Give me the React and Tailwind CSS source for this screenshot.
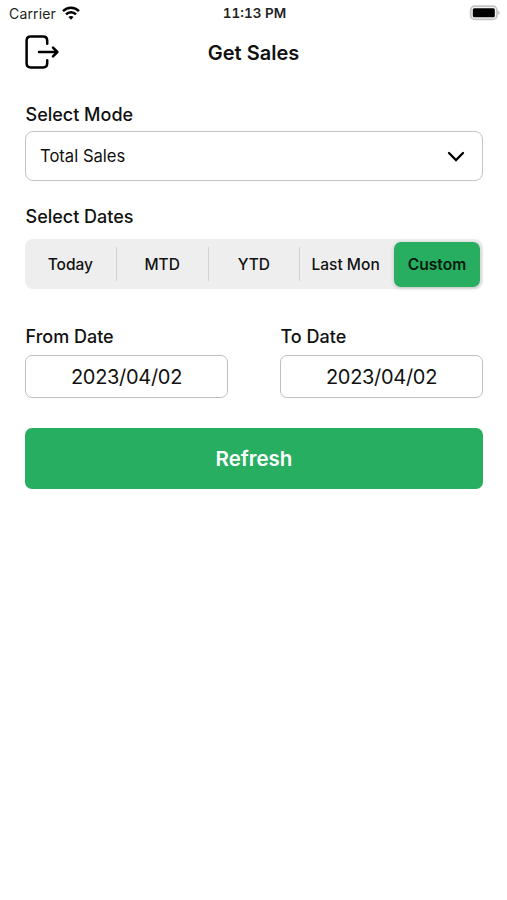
import React, { useState } from "react";

const ranges = ["Today", "MTD", "YTD", "Last Mon", "Custom"];

function StatusBar() {
  return (
    <div className="grid h-[26px] grid-cols-3 items-center pl-[9px] pr-[7px] text-[#222]">
      <div className="flex items-center gap-[6px]">
        <span className="text-[14px] tracking-[0.15px]">Carrier</span>
        <svg width="18" height="14" viewBox="0 0 18 14" fill="none" stroke="#000" strokeWidth="2.5">
          <path d="M1 5.1C5.4 0.5 12.6 0.5 17 5.1" />
          <path d="M4 8.3C6.7 5.4 11.3 5.4 14 8.3" />
          <path d="M9 13.8L6.4 11.1C7.8 9.7 10.2 9.7 11.6 11.1Z" fill="#000" stroke="none" />
        </svg>
      </div>
      <div className="pt-px text-center text-[13.5px] font-semibold tabular-nums">11:13 PM</div>
      <div className="flex justify-end">
        <svg width="31" height="16" viewBox="0 0 31 16">
          <rect x="1.7" y="1.2" width="26.2" height="13.2" rx="4" fill="#f4f4f4" stroke="#c4c4c4" strokeWidth="1.8" />
          <rect x="3.8" y="3.3" width="22" height="9" rx="1.5" fill="#000" />
          <path d="M29.3 5.8C31 6.5 31 9.1 29.3 9.8Z" fill="#aaa" />
        </svg>
      </div>
    </div>
  );
}

function DateField({ label, value }) {
  return (
    <div className="w-[203px]">
      <div className="h-[29px] pl-[0.5px] text-[18px] leading-[22px] font-medium">{label}</div>
      <button
        type="button"
        className="h-[43px] w-full rounded-[7px] border border-[#bfbfbf] text-[20px] tracking-[-0.3px]"
      >
        {value}
      </button>
    </div>
  );
}

function App() {
  const [range, setRange] = useState("Custom");

  return (
    <div className="h-[900px] w-[507px] overflow-hidden bg-white font-['Inter',sans-serif] text-[#111]">
      <StatusBar />

      <header className="grid h-[52px] grid-cols-[60px_1fr_60px] items-center px-[25px]">
        <button type="button" aria-label="Log out">
          <svg
            width="35"
            height="35"
            viewBox="0 0 35 35"
            fill="none"
            stroke="#000"
            strokeWidth="2.5"
            strokeLinecap="round"
            strokeLinejoin="round"
          >
            <path d="M22.2 8.7V5.8C22.2 3.2 20.6 1.6 18 1.6H5.8C3.2 1.6 1.6 3.2 1.6 5.8V28.2C1.6 30.8 3.2 32.4 5.8 32.4H18C20.6 32.4 22.2 30.8 22.2 28.2V25.2" />
            <path d="M14 17H32.2M28 12.7L32.4 17L28 21.3" />
          </svg>
        </button>
        <h1 className="pt-px text-center text-[20px] font-semibold">Get Sales</h1>
      </header>

      <main className="pl-[25px] pr-[24px] pt-[26px]">
        <div className="h-[27px] pl-[0.5px] text-[18px] leading-[22px] font-medium">Select Mode</div>
        <button
          type="button"
          className="flex h-[50px] w-full items-center justify-between rounded-[8px] border border-[#c4c4c4] pl-[14px] pr-[17px] text-[16.6px]"
        >
          <span>Total Sales</span>
          <svg className="mt-px" width="18" height="12" viewBox="0 0 18 12" fill="none" stroke="#000" strokeWidth="2.3" strokeLinecap="round">
            <path d="M2 2L9 9L16 2" />
          </svg>
        </button>

        <div className="mt-[25px] h-[33px] pl-[0.5px] text-[18px] leading-[22px] font-medium">Select Dates</div>
        <div className="flex h-[50px] items-center rounded-[8px] bg-[#eee]">
          {ranges.map((item, i) => (
            <button
              key={item}
              type="button"
              onClick={() => setRange(item)}
              className={
                item === range
                  ? "ml-[3px] mr-[3px] h-[45px] w-[86px] rounded-[7px] bg-[#27ae60] pt-[2px] text-[15.6px] font-semibold text-[#07190e] shadow-[0_1px_4px_rgba(0,0,0,0.2)]"
                  : i < 3
                    ? "h-[34px] flex-1 border-r border-[#d2d2d2] pt-px text-[15.5px] font-medium"
                    : "h-[34px] flex-1 pt-px text-[15.5px] font-medium"
              }
            >
              {item}
            </button>
          ))}
        </div>

        <div className="mt-[37px] flex justify-between">
          <DateField label="From Date" value="2023/04/02" />
          <DateField label="To Date" value="2023/04/02" />
        </div>

        <button
          type="button"
          className="mt-[30px] h-[61px] w-full rounded-[7px] bg-[#27ae60] pt-px text-[20.5px] font-semibold text-white"
        >
          Refresh
        </button>
      </main>
    </div>
  );
}

export default App;
